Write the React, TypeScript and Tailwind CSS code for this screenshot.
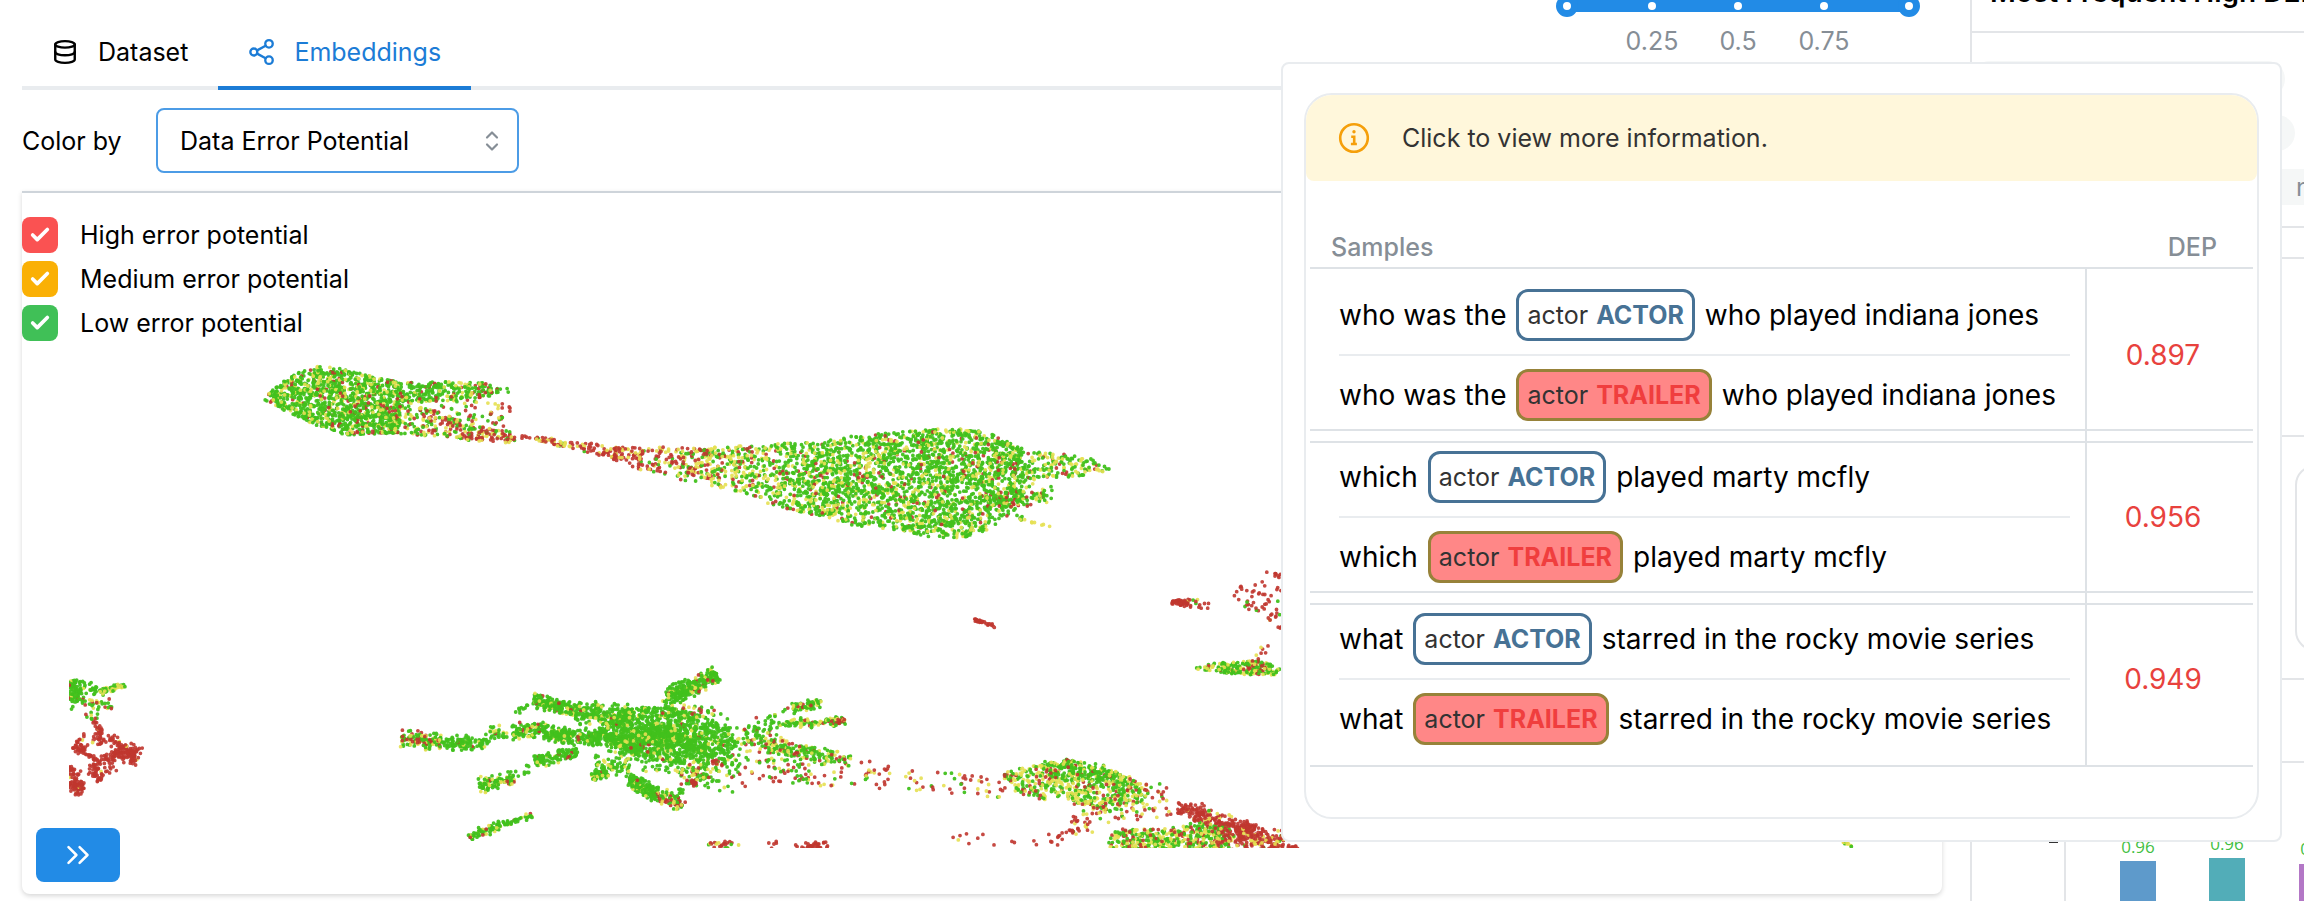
import { useMemo, useState } from 'react';
import { Check, ChevronDown, ChevronUp, ChevronsRight, Database } from 'lucide-react';

type Mix = [number, number, number];

interface Band {
  // [x, top, bottom]
  stations: [number, number, number][];
  count: number;
  mix: Mix;
  mixEnd?: Mix;
}

// [x1, y1, x2, y2, width, count, mix]
type Arm = [number, number, number, number, number, number, Mix];

// shares of low, medium and high error potential
const LOW: Mix = [0.94, 0.05, 0.01];
const MOSTLY_LOW: Mix = [0.76, 0.2, 0.04];
const MIXED: Mix = [0.5, 0.3, 0.2];
const TRAIL: Mix = [0.12, 0.3, 0.58];
const HIGH: Mix = [0, 0.03, 0.97];

const BANDS: Band[] = [
  { stations: [[264, 396, 400], [280, 384, 408], [295, 373, 416], [318, 366, 426], [345, 369, 435], [372, 376, 434], [400, 382, 433]], count: 1250, mix: [0.8, 0.16, 0.04], mixEnd: [0.7, 0.2, 0.1] },
  { stations: [[400, 383, 404], [430, 382, 402], [455, 381, 400], [480, 382, 398], [510, 389, 392]], count: 250, mix: [0.72, 0.2, 0.08], mixEnd: [0.5, 0.22, 0.28] },
  { stations: [[390, 404, 434], [420, 407, 435], [440, 412, 437], [470, 424, 441], [510, 432, 443]], count: 260, mix: [0.4, 0.33, 0.27], mixEnd: [0.15, 0.3, 0.55] },
  { stations: [[440, 400, 426], [475, 400, 430], [510, 402, 440]], count: 70, mix: MIXED, mixEnd: [0.2, 0.2, 0.6] },
  { stations: [[500, 433, 440], [525, 435, 441], [550, 438, 444], [570, 442, 449], [600, 444, 456], [622, 448, 462]], count: 130, mix: [0.1, 0.3, 0.6], mixEnd: [0.02, 0.25, 0.73] },
  { stations: [[615, 447, 458], [640, 448, 470], [660, 447, 474], [680, 447, 480], [710, 446, 484]], count: 210, mix: [0.04, 0.3, 0.66], mixEnd: [0.3, 0.4, 0.3] },
  { stations: [[705, 448, 484], [740, 446, 492], [770, 443, 504], [800, 443, 512]], count: 430, mix: [0.4, 0.4, 0.2], mixEnd: [0.66, 0.27, 0.07] },
  { stations: [[800, 443, 512], [830, 440, 518], [850, 436, 525], [900, 432, 530], [930, 429, 537], [960, 429, 538], [985, 431, 532], [1005, 440, 518], [1025, 452, 500]], count: 2350, mix: [0.7, 0.25, 0.05], mixEnd: [0.78, 0.15, 0.07] },
  { stations: [[1025, 454, 490], [1040, 452, 478], [1060, 453, 478], [1085, 457, 475], [1112, 466, 471]], count: 160, mix: [0.6, 0.29, 0.11] },
  { stations: [[1004, 773, 782], [1020, 767, 795], [1040, 765, 800], [1065, 759, 798], [1085, 762, 806], [1100, 764, 812], [1115, 770, 812], [1128, 775, 808], [1142, 784, 800]], count: 560, mix: [0.4, 0.43, 0.17], mixEnd: [0.56, 0.35, 0.09] },
  { stations: [[1040, 762, 776], [1070, 760, 780], [1100, 768, 780], [1128, 776, 786]], count: 130, mix: [0.9, 0.09, 0.01] },
  { stations: [[1105, 842, 850], [1115, 832, 850], [1135, 829, 850], [1165, 828, 850], [1200, 822, 850], [1230, 828, 850]], count: 430, mix: [0.52, 0.38, 0.1], mixEnd: [0.35, 0.4, 0.25] },
  { stations: [[1196, 666, 669], [1215, 663, 672], [1235, 662, 674], [1260, 660, 675], [1281, 669, 675]], count: 200, mix: [0.62, 0.32, 0.06] },
  { stations: [[860, 762, 788], [930, 770, 792], [1005, 773, 800]], count: 64, mix: TRAIL },
];

const ARMS: Arm[] = [
  [973, 619, 988, 624, 2, 24, HIGH],
  [988, 624, 995, 627, 3, 8, HIGH],
  [985, 500, 1053, 495, 13, 100, [0.55, 0.17, 0.28]],
  [1015, 446, 1020, 508, 16, 30, MOSTLY_LOW],
  [1012, 508, 1022, 519, 3, 6, LOW],
  [1020, 519, 1050, 527, 2, 10, [0, 1, 0]],
  // far left
  [73, 680, 77, 702, 15, 90, [0.88, 0.1, 0.02]],
  [82, 684, 96, 692, 10, 22, MOSTLY_LOW],
  [100, 693, 125, 685, 6, 55, [0.5, 0.5, 0]],
  [71, 703, 112, 705, 10, 34, MIXED],
  [86, 714, 98, 718, 6, 8, MIXED],
  [91, 716, 102, 734, 5, 24, HIGH],
  [93, 737, 118, 742, 9, 34, HIGH],
  [116, 748, 139, 757, 15, 120, HIGH],
  [73, 747, 87, 750, 8, 34, HIGH],
  [77, 742, 85, 735, 3, 9, HIGH],
  [86, 754, 98, 760, 4, 14, HIGH],
  [88, 768, 118, 754, 9, 42, HIGH],
  [92, 778, 118, 766, 9, 26, HIGH],
  [69, 765, 72, 778, 5, 20, HIGH],
  [72, 773, 98, 773, 8, 16, HIGH],
  [70, 783, 83, 790, 13, 70, HIGH],
  // star shaped cluster
  [401, 739, 442, 742, 14, 120, [0.55, 0.25, 0.2]],
  [440, 743, 488, 744, 13, 110, LOW],
  [486, 735, 506, 730, 12, 28, MOSTLY_LOW],
  [512, 732, 546, 730, 13, 110, [0.72, 0.23, 0.05]],
  [544, 734, 600, 738, 13, 230, LOW],
  [598, 738, 645, 742, 18, 140, LOW],
  [533, 700, 575, 710, 11, 160, [0.84, 0.14, 0.02]],
  [575, 712, 632, 716, 17, 210, [0.82, 0.16, 0.02]],
  [511, 718, 530, 704, 5, 9, LOW],
  [535, 761, 578, 752, 10, 120, [0.9, 0.07, 0.03]],
  [479, 786, 514, 778, 12, 100, [0.64, 0.29, 0.07]],
  [512, 775, 530, 768, 8, 12, LOW],
  [468, 836, 500, 825, 9, 60, [0.78, 0.16, 0.06]],
  [498, 826, 536, 814, 5, 34, [0.78, 0.18, 0.04]],
  [668, 697, 692, 687, 14, 150, LOW],
  [690, 689, 716, 673, 13, 130, [0.84, 0.08, 0.08]],
  [664, 700, 672, 712, 5, 10, LOW],
  [672, 712, 715, 710, 10, 30, MIXED],
  [628, 780, 656, 794, 11, 170, LOW],
  [654, 795, 685, 806, 9, 80, [0.45, 0.25, 0.3]],
  [663, 795, 684, 790, 10, 18, MOSTLY_LOW],
  [592, 777, 607, 772, 8, 46, MOSTLY_LOW],
  [594, 764, 630, 766, 20, 60, [0.84, 0.16, 0]],
  [680, 770, 710, 778, 14, 46, [0.3, 0.4, 0.3]],
  [690, 782, 696, 784, 5, 14, HIGH],
  [712, 762, 724, 764, 5, 12, HIGH],
  [620, 745, 740, 762, 44, 280, [0.82, 0.17, 0.01]],
  [740, 735, 810, 772, 34, 130, [0.5, 0.28, 0.22]],
  [765, 744, 850, 762, 12, 150, [0.58, 0.24, 0.18]],
  [705, 725, 765, 730, 20, 36, LOW],
  [768, 727, 802, 722, 7, 34, MOSTLY_LOW],
  [800, 724, 845, 721, 7, 72, [0.45, 0.42, 0.13]],
  [836, 722, 846, 721, 4, 14, HIGH],
  [768, 719, 788, 707, 5, 10, MOSTLY_LOW],
  [792, 709, 822, 703, 8, 66, [0.76, 0.16, 0.08]],
  [725, 772, 880, 776, 24, 50, TRAIL],
  [705, 843, 740, 846, 8, 24, [0.2, 0.2, 0.6]],
  [758, 845, 780, 844, 8, 5, HIGH],
  [795, 846, 828, 846, 6, 30, HIGH],
  // lower trails
  [1130, 788, 1168, 790, 12, 20, TRAIL],
  [1070, 822, 1170, 806, 24, 80, [0.06, 0.34, 0.6]],
  [920, 836, 1060, 842, 12, 16, HIGH],
  [1050, 840, 1090, 826, 6, 14, HIGH],
  [1178, 808, 1204, 811, 11, 56, HIGH],
  [1195, 815, 1252, 832, 16, 150, [0.05, 0.14, 0.81]],
  [1215, 840, 1284, 842, 18, 170, [0.06, 0.18, 0.76]],
  [1240, 826, 1262, 836, 12, 60, HIGH],
  [1270, 846, 1298, 847, 3, 20, HIGH],
  // right edge
  [1172, 602, 1188, 603, 4, 44, HIGH],
  [1183, 601, 1211, 606, 9, 18, [0.25, 0.25, 0.5]],
  [1236, 586, 1283, 594, 14, 24, HIGH],
  [1235, 602, 1283, 612, 18, 24, [0.15, 0.05, 0.8]],
  [1264, 572, 1282, 575, 4, 8, HIGH],
  [1268, 618, 1282, 628, 6, 7, HIGH],
  [1255, 658, 1273, 646, 9, 8, [0, 0.4, 0.6]],
  [1248, 666, 1262, 672, 6, 14, HIGH],
  [1840, 840, 1852, 845, 5, 18, [0.2, 0.6, 0.2]],
];

const LAYERS = 8;

const createRandom = (seed: number) => () => {
  seed = (seed * 1664525 + 1013904223) % 4294967296;
  return seed / 4294967296;
};

// Points are spread over a few layers so that no colour hides another one
const buildLayers = () => {
  const random = createRandom(42);
  const layers = Array.from({ length: LAYERS }, () => ['', '', '']);

  const add = (x: number, y: number, mix: Mix) => {
    const roll = random();
    const level = roll < mix[0] ? 0 : roll < mix[0] + mix[1] ? 1 : 2;
    const layer = Math.floor(random() * LAYERS);
    layers[layer][level] += `M${x.toFixed(1)} ${y.toFixed(1)}h.01`;
  };

  BANDS.forEach(({ stations, count, mix, mixEnd = mix }) => {
    const first = stations[0][0];
    const last = stations[stations.length - 1][0];
    const tallest = Math.max(...stations.map(([, top, bottom]) => bottom - top));
    let placed = 0;
    while (placed < count) {
      const x = first + random() * (last - first);
      const next = stations.findIndex((s) => s[0] >= x) || 1;
      const [x0, t0, b0] = stations[next - 1];
      const [x1, t1, b1] = stations[next];
      const k = (x - x0) / (x1 - x0);
      const top = t0 + (t1 - t0) * k;
      const bottom = b0 + (b1 - b0) * k;
      if (random() > (bottom - top) / tallest) continue;
      const share = (x - first) / (last - first);
      const local = mix.map((m, i) => m + (mixEnd[i] - m) * share) as Mix;
      add(x, top + random() * (bottom - top), local);
      placed += 1;
    }
  });

  ARMS.forEach(([x1, y1, x2, y2, width, count, mix]) => {
    const length = Math.hypot(x2 - x1, y2 - y1);
    for (let i = 0; i < count; i += 1) {
      const along = random();
      const across = (random() + random() - 1) * width * 0.75;
      add(
        x1 + (x2 - x1) * along - ((y2 - y1) / length) * across,
        y1 + (y2 - y1) * along + ((x2 - x1) / length) * across,
        mix
      );
    }
  });

  // dense core
  for (let i = 0; i < 1150; i += 1) {
    const angle = random() * Math.PI * 2;
    const radius = Math.pow(random(), 0.75);
    const dx = Math.cos(angle) * radius;
    const dy = Math.sin(angle) * radius;
    add(667 + dx * 68, 735 + dy * 27 + dx * 7, [0.91, 0.08, 0.01]);
  }

  return layers;
};

const EmbeddingsPlot = ({ visible }: { visible: boolean[] }) => {
  const layers = useMemo(buildLayers, []);

  return (
    <svg
      viewBox="69 193 1840 655"
      className="pointer-events-none absolute left-[47px] top-0 h-[655px] w-[1840px]"
      fill="none"
      strokeWidth="3.8"
      strokeLinecap="round"
      aria-label="Embeddings plot"
    >
      {layers.map(([low, medium, high], i) => (
        <g key={i}>
          {visible[2] && <path d={low} stroke="#41c11c" strokeOpacity="0.95" />}
          {visible[1] && <path d={medium} stroke="#e6e052" strokeOpacity="0.9" />}
          {visible[0] && <path d={high} stroke="#c0362f" strokeOpacity="0.9" />}
        </g>
      ))}
    </svg>
  );
};

const ShareIcon = () => (
  <svg viewBox="0 0 24 24" className="size-7" fill="none" stroke="currentColor" strokeWidth="2" strokeLinecap="round" strokeLinejoin="round">
    <circle cx="5" cy="12" r="3" />
    <circle cx="18" cy="5" r="3.2" />
    <circle cx="18" cy="19" r="3.2" />
    <path d="M7.8 10.6l7.3-4M7.8 13.4l7.3 4" />
  </svg>
);

const InfoIcon = () => (
  <svg viewBox="0 0 32 32" className="size-8 text-[#f59f0a]" fill="none" stroke="currentColor" strokeWidth="2.6">
    <circle cx="16" cy="16" r="13.8" />
    <circle cx="16" cy="9.8" r="1.7" fill="currentColor" stroke="none" />
    <path d="M13.2 14.8h3v7M12.9 22h6" />
  </svg>
);

const Tabs = () => (
  <nav className="flex flex-1 self-end">
    <a href="#dataset" className="flex items-center gap-5 px-[30px] pb-[18px] text-black">
      <Database size={26} strokeWidth={2.2} />
      Dataset
    </a>
    <a href="#embeddings" className="-mb-1 flex items-center gap-[18px] border-b-4 border-[#1c7cd6] px-[30px] pb-[18px] text-[#1c7cd6]">
      <ShareIcon />
      Embeddings
    </a>
  </nav>
);

const MARKS = ['0', '0.25', '0.5', '0.75', '1'];

const RangeSlider = () => (
  <div className="relative mr-[22px] w-[364px]">
    <div className="-mt-[5px] flex h-[22px] items-center">
      <div className="flex h-3 w-full items-center justify-between bg-[#228be6] bg-clip-content px-2">
        {MARKS.map((mark) => (
          <span
            key={mark}
            className={
              mark === '0' || mark === '1'
                ? '-mx-2 size-[22px] rounded-full border-[7px] border-[#228be6] bg-white'
                : 'size-2 rounded-full bg-white'
            }
          />
        ))}
      </div>
      <input type="range" min={0} max={1} step={0.01} defaultValue={0} aria-label="Minimum" className="absolute left-0 top-0 h-4 w-1/2 opacity-0" />
      <input type="range" min={0} max={1} step={0.01} defaultValue={1} aria-label="Maximum" className="absolute right-0 top-0 h-4 w-1/2 opacity-0" />
    </div>
    <div className="mt-2 flex justify-center text-[#868e96]">
      {MARKS.slice(1, 4).map((mark) => (
        <span key={mark} className="w-[86px] text-center">{mark}</span>
      ))}
    </div>
  </div>
);

const LEGEND = [
  { label: 'High error potential', color: 'bg-[#fa5252]' },
  { label: 'Medium error potential', color: 'bg-[#fab005]' },
  { label: 'Low error potential', color: 'bg-[#40c057]' },
];

const SAMPLES = [
  { before: 'who was the', after: 'who played indiana jones', dep: '0.897', padding: 'pt-5 pb-2' },
  { before: 'which', after: 'played marty mcfly', dep: '0.956', padding: 'pt-2 pb-2' },
  { before: 'what', after: 'starred in the rocky movie series', dep: '0.949', padding: 'pt-2 pb-5' },
];

interface SampleLineProps {
  before: string;
  after: string;
  predicted?: boolean;
}

const SampleLine = ({ before, after, predicted = false }: SampleLineProps) => (
  <div className="flex h-[52px] items-center gap-2.5 whitespace-nowrap text-[28px]">
    {before}
    <span
      className={`flex h-full items-center gap-2 rounded-xl border-[3px] px-2 text-[25px] text-[#333] ${
        predicted ? 'border-[#978239] bg-[#ff8787]' : 'border-[#477295]'
      }`}
    >
      actor
      <b className={predicted ? 'font-bold text-[#f03e3e]' : 'font-bold text-[#477295]'}>
        {predicted ? 'TRAILER' : 'ACTOR'}
      </b>
    </span>
    {after}
  </div>
);

const SamplesPopover = () => (
  <div role="dialog" aria-label="Samples" className="absolute right-[22px] top-[62px] w-[1001px] rounded-lg border-2 border-[#e9ecef] bg-white px-[21px] pb-[21px] pt-[29px]">
    <div className="overflow-hidden rounded-[28px] border-2 border-[#e9ecef] pb-[50px]">
      <div className="flex h-[86px] items-center gap-8 rounded-b-lg bg-[#fff7db] px-8 text-[#333]">
        <InfoIcon />
        <p>Click to view more information.</p>
      </div>
      <div className="px-1 pt-[46px]">
        <table className="w-full border-separate border-spacing-0">
          <thead>
            <tr className="leading-10 text-[#868e96]">
              <th className="border-b-2 border-[#dee2e6] px-[21px] text-left font-medium">Samples</th>
              <th className="w-[168px] border-b-2 border-[#dee2e6] pr-9 text-right font-medium">DEP</th>
            </tr>
          </thead>
          {SAMPLES.map(({ before, after, dep, padding }, i) => (
            <tbody key={dep}>
              {i > 0 && (
                <tr aria-hidden="true">
                  <td className="h-3 border-b-2 border-[#dee2e6]" />
                  <td className="border-b-2 border-l-2 border-[#dee2e6]" />
                </tr>
              )}
              <tr>
                <td className={`border-b-2 border-[#dee2e6] pl-[29px] pr-[15px] ${padding}`}>
                  <SampleLine before={before} after={after} />
                  <div className="my-[13px] h-0.5 bg-[#e9ecef]" />
                  <SampleLine before={before} after={after} predicted />
                </td>
                <td className={`border-b-2 border-l-2 border-[#dee2e6] pr-[14px] text-center text-[28px] text-[#e8423d] ${padding}`}>
                  {dep}
                </td>
              </tr>
            </tbody>
          ))}
        </table>
      </div>
    </div>
  </div>
);

const BarChart = () => (
  <svg viewBox="0 0 332 138" className="h-[138px] w-[332px] shrink-0" fontFamily="Open Sans, sans-serif" fontSize="17" fill="#43c043" textAnchor="middle">
    <path d="M93 0v138" stroke="#e3e5e8" strokeWidth="2" />
    <path d="M77 79h9" stroke="#333" strokeWidth="2" />
    <rect x="148" y="98" width="36" height="40" fill="#5e9acb" />
    <rect x="237" y="95" width="36" height="43" fill="#52adb8" />
    <rect x="327" y="101" width="36" height="37" fill="#b377c6" />
    <text x="166" y="90">0.96</text>
    <text x="255" y="87">0.96</text>
    <text x="345" y="92">0.95</text>
  </svg>
);

const SidePanel = () => (
  <aside className="flex h-screen w-[334px] shrink-0 flex-col overflow-hidden border-l-2 border-[#e3e5e8]">
    <h2 className="-mt-6 h-[57px] shrink-0 whitespace-nowrap border-b-2 border-[#e3e5e8] pl-[18px] text-[28px] font-semibold text-black">
      Most Frequent High DEP Words
    </h2>
    <div className="flex h-[195px] shrink-0 flex-col gap-[18px] border-b-2 border-[#e3e5e8] pt-7 text-[#868e96]">
      <span className="h-9 w-[313px] rounded-full bg-[#f5f7f7]" />
      <span className="h-9 w-[323px] rounded-full bg-[#f5f7f7]" />
      <span className="h-9 w-[420px] rounded-full bg-[#f5f7f7] pl-[324px] leading-9">name</span>
    </div>
    <div className="h-[31px] shrink-0 border-b-2 border-[#e3e5e8]" />
    <div className="h-[178px] shrink-0 border-b-2 border-[#e3e5e8]" />
    <div className="h-[243px] shrink-0 border-b-2 border-[#e3e5e8] pt-7">
      <div className="ml-[323px] h-[186px] w-[200px] rounded-[20px] border-2 border-[#e3e5e8]" />
    </div>
    <div className="h-[83px] shrink-0 border-b-2 border-[#e3e5e8]" />
    <BarChart />
  </aside>
);

const App = () => {
  const [visible, setVisible] = useState([true, true, true]);

  const toggle = (index: number) => {
    setVisible(visible.map((v, i) => (i === index ? !v : v)));
  };

  return (
    <div className="relative flex h-screen overflow-hidden bg-white font-[Inter,sans-serif] text-[25px] leading-8 text-black">
      <main className="flex min-w-0 flex-1 flex-col pb-[7px] pl-[22px] pr-7">
        <header className="flex h-[90px] shrink-0 items-start border-b-4 border-[#e9ecef]">
          <Tabs />
          <RangeSlider />
        </header>

        <div className="flex h-[101px] shrink-0 items-center">
          <label htmlFor="color-by" className="w-[134px]">Color by</label>
          <div className="relative">
            <select id="color-by" className="h-[65px] w-[363px] appearance-none rounded-lg border-2 border-[#4c9ce6] bg-white px-[22px] outline-none">
              <option>Data Error Potential</option>
            </select>
            <span className="pointer-events-none absolute inset-y-0 right-[17px] flex flex-col justify-center text-[#868e96]">
              <ChevronUp size={20} strokeWidth={2.6} className="-mb-1" />
              <ChevronDown size={20} strokeWidth={2.6} className="-mt-1" />
            </span>
          </div>
        </div>

        <section className="relative flex flex-1 flex-col justify-between rounded-b-lg border-t-2 border-[#ced4da] shadow-[0_2px_5px_rgba(0,0,0,0.16)]">
          <EmbeddingsPlot visible={visible} />
          <div className="flex flex-col items-start gap-2 pt-6">
            {LEGEND.map(({ label, color }, i) => (
              <label key={label} className="relative flex h-9 items-center gap-[22px]">
                <input
                  type="checkbox"
                  checked={visible[i]}
                  onChange={() => toggle(i)}
                  className={`size-9 appearance-none rounded-lg ${color}`}
                />
                <Check size={22} strokeWidth={4} className="pointer-events-none absolute left-[7px] text-white" />
                {label}
              </label>
            ))}
          </div>
          <button type="button" aria-label="Expand" className="mb-3 ml-[14px] flex h-[54px] w-[84px] items-center justify-center rounded-lg bg-[#228be6] text-white">
            <ChevronsRight size={38} strokeWidth={1.6} />
          </button>
        </section>
      </main>

      <SidePanel />
      <div className="pointer-events-none absolute bottom-0 left-[900px] h-14 w-[820px] bg-radial-[closest-side_at_50%_100%] from-black/15 to-transparent" />
      <SamplesPopover />
    </div>
  );
};

export default App;
